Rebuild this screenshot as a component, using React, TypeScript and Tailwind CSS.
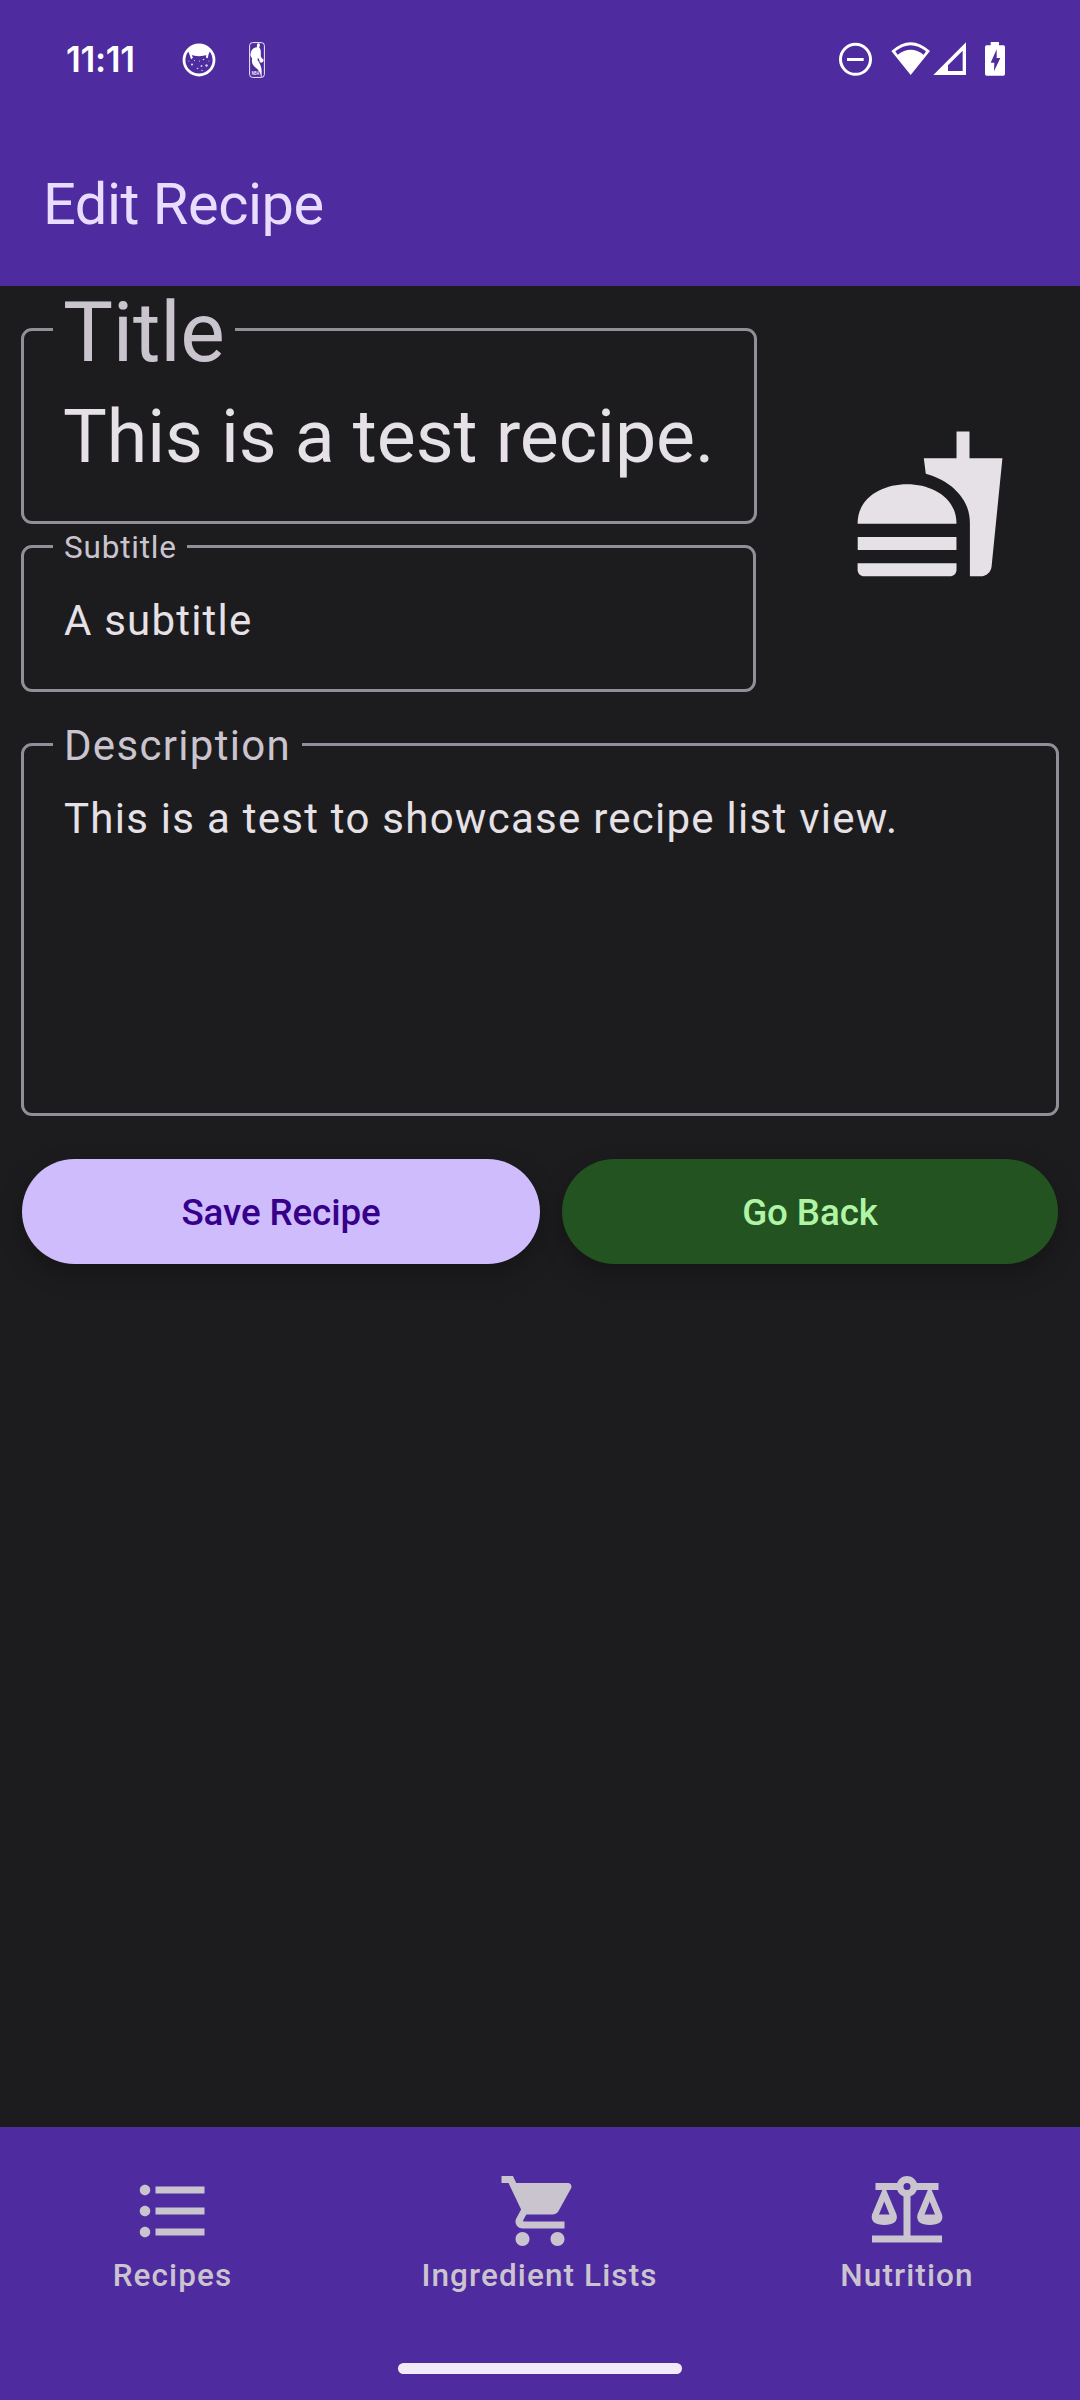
import type { ReactNode } from "react";

function CatIcon() {
  return (
    <svg width="34" height="34" viewBox="0 0 34 34" fill="none">
      <circle cx="17" cy="17" r="15" stroke="#fff" strokeWidth="2.8" />
      <path
        d="M6 8C9 3.500 13 2 17 2S25 3.500 28 8L26.500 11.500 25.800 15.300 23.800 14.600 24.300 12.300C22.500 11.800 21.500 13.200 17 13.200S11.500 11.800 9.700 12.300L11 14.800 9 16.300 7.500 11.500 6 8Z"
        fill="#fff"
      />
      <g fill="#fff" opacity="0.8">
        <circle cx="10" cy="21.500" r="1.100" />
        <circle cx="24.500" cy="22.500" r="1.200" />
        <circle cx="19.500" cy="23" r="0.900" />
        <circle cx="15.500" cy="25.500" r="0.800" />
        <circle cx="17.500" cy="18" r="0.600" />
        <circle cx="12.500" cy="17.500" r="0.600" />
        <circle cx="21.500" cy="16.500" r="0.800" />
        <circle cx="20" cy="27.500" r="0.700" />
        <circle cx="7" cy="18" r="0.500" />
        <circle cx="27" cy="18" r="0.500" />
      </g>
    </svg>
  );
}

function BasketballIcon() {
  return (
    <svg width="16" height="36" viewBox="0 0 16 36" fill="none">
      <rect x="0.600" y="0.600" width="14.800" height="34.800" rx="3" stroke="#fff" strokeWidth="0.900" />
      <path
        d="M9.200 1.200C11 1 11.200 3 10.600 4.300L10.200 5.500C11.300 6.500 11.800 8 11.800 10V14.500L13 16.500C15 16.500 15 20 13 20.500 11.500 21 10.300 20 10.500 18.500L9 15.500 8.500 18C10.500 20.500 12.200 24 12.600 28V35H12C11.500 31 10 28 6.500 25.500 3.500 23.500 2.200 20 3.200 16.500 1.800 14.500 1 13.500 1.600 11.500 2.200 9 3.200 6.500 6.200 5.600L8 5.200C7.800 3.500 7.800 1.600 9.200 1.200Z"
        fill="#fff"
      />
      <text x="2.700" y="32.600" fontSize="6" fontWeight="500" fill="#fff" fontFamily="Roboto, sans-serif" textLength="7.500" lengthAdjust="spacingAndGlyphs">
        NBA
      </text>
    </svg>
  );
}

function StatusBar() {
  return (
    <div className="flex h-[119px] items-start justify-between pl-[66px] pr-[73px] pt-[42px] text-white">
      <div className="flex items-start">
        <span className="w-[116px] font-['Inter',sans-serif] text-[35px] leading-[34px] font-semibold tracking-[-0.300px]">11:11</span>
        <div className="mt-px">
          <CatIcon />
        </div>
        <div className="ml-[33px]">
          <BasketballIcon />
        </div>
      </div>
      <svg width="168" height="36" viewBox="0 0 504 108" fill="#fff">
        <circle cx="49.500" cy="52" r="45" fill="none" stroke="#fff" strokeWidth="9" />
        <rect x="24" y="48" width="50" height="9" />
        <path
          fillRule="evenodd"
          d="M157 27Q215 -26 273 27L215 99ZM169 28L176 38Q215 9 254 38L261 28Q215 -8 169 28Z"
        />
        <path fillRule="evenodd" d="M283 99L381 1V99ZM371 26L327 70V87H371Z" />
        <path
          fillRule="evenodd"
          d="M455 0H480V10H493Q498 10 498 15V96Q498 101 493 101H443Q438 101 438 96V15Q438 10 443 10H455ZM473 22L455 62H466L465 88L484 48H473Z"
        />
      </svg>
    </div>
  );
}

type FieldProps = {
  label: string;
  value: string;
  boxClass: string;
  labelClass: string;
  valueClass: string;
};

function OutlinedField({ label, value, boxClass, labelClass, valueClass }: FieldProps) {
  return (
    <div className={`relative rounded-[11px] border-[3px] border-[#938f99] ${boxClass}`}>
      <span className={`absolute left-[29px] bg-[#1c1c1e] leading-none whitespace-nowrap text-[#cac4cf] ${labelClass}`}>
        {label}
      </span>
      <div className={`leading-none whitespace-nowrap text-[#e6e1e6] ${valueClass}`}>{value}</div>
    </div>
  );
}

function NavItem({ label, className, children }: { label: string; className: string; children: ReactNode }) {
  return (
    <div className={`flex flex-col items-center pt-[42px] ${className}`}>
      <svg width="84" height="84" viewBox="0 0 24 24" fill="#cac4cf">
        {children}
      </svg>
      <span className="mt-[7px] text-[31.500px] leading-none font-medium tracking-[1.100px] whitespace-nowrap text-[#cac4cf]">
        {label}
      </span>
    </div>
  );
}

export default function App() {
  return (
    <div className="flex h-[2400px] w-[1080px] flex-col overflow-hidden bg-[#1c1c1e] font-['Roboto',sans-serif]">
      <header className="h-[286px] shrink-0 bg-[#4e2b9f]">
        <StatusBar />
        <h1 className="pt-[57px] pl-[43px] text-[57.750px] leading-none tracking-[-0.450px] text-[#e9ddff]">Edit Recipe</h1>
      </header>

      <main className="flex grow flex-col px-[21px] pt-[42px]">
        <div className="flex">
          <div className="flex w-[736px] flex-col gap-[21px]">
            <OutlinedField
              label="Title"
              value="This is a test recipe."
              boxClass="h-[196px]"
              labelClass="top-[-40px] w-[182px] pl-[10px] text-[84px] tracking-[-0.300px]"
              valueClass="pt-[70px] pl-[39px] text-[73.500px] tracking-[-0.080px]"
            />
            <OutlinedField
              label="Subtitle"
              value="A subtitle"
              boxClass="h-[147px] w-[735px]"
              labelClass="top-[-16px] w-[134px] pl-[11px] text-[31.500px] tracking-[0.800px]"
              valueClass="pt-[51.500px] pl-[40px] text-[42px] tracking-[1.200px]"
            />
          </div>
          <div className="flex grow justify-center pt-[97px] pr-[1px] pl-[44px]">
            <svg width="158" height="158" viewBox="0 0 24 24" fill="#e6e1e6">
              <path d="M18.060 22.990h1.660c.84 0 1.530-.64 1.630-1.460L23 5.050h-5V1h-1.970v4.050h-4.970l.3 2.340c1.710.47 3.310 1.320 4.270 2.260 1.440 1.420 2.430 2.890 2.430 5.290v8.050zM1 21.990V21h15.030v.99c0 .55-.45 1-1.010 1H2.010c-.56 0-1.010-.45-1.010-1zm15.030-7c0-8-15.030-8-15.030 0h15.030zM1.020 17h15v2h-15z" />
            </svg>
          </div>
        </div>

        <OutlinedField
          label="Description"
          value="This is a test to showcase recipe list view."
          boxClass="mt-[51px] h-[373px]"
          labelClass="top-[-21px] w-[249px] pl-[11px] text-[42px] tracking-[1.310px]"
          valueClass="pt-[51.500px] pl-[40px] text-[42px] tracking-[1.260px]"
        />

        <div className="mt-[43px] flex gap-[22px] px-px">
          <button className="h-[105px] w-[518px] rounded-full bg-[#cfbcfc] pt-[4px] text-[36.750px] leading-none font-medium tracking-[-0.100px] text-[#37008a] shadow-[0_10px_24px_rgba(0,0,0,0.25)]">
            Save Recipe
          </button>
          <button className="h-[105px] w-[496px] rounded-full bg-[#225320] pt-[4px] text-[36.750px] leading-none font-medium tracking-[-0.100px] text-[#b0f5a6] shadow-[0_10px_24px_rgba(0,0,0,0.25)]">
            Go Back
          </button>
        </div>
      </main>

      <nav className="flex h-[273px] shrink-0 flex-col bg-[#4e2b9f]">
        <div className="flex h-[236px]">
          <NavItem label="Recipes" className="w-[345px]">
            <path d="M4 10.500c-.83 0-1.500.67-1.500 1.500s.67 1.500 1.500 1.500 1.500-.67 1.500-1.500-.67-1.500-1.500-1.500zm0-6c-.83 0-1.500.67-1.500 1.500S3.170 7.500 4 7.500 5.500 6.830 5.500 6 4.830 4.500 4 4.500zm0 12c-.83 0-1.500.68-1.500 1.500s.68 1.500 1.500 1.500 1.500-.68 1.500-1.500-.67-1.500-1.500-1.500zM7 19h14v-2H7v2zm0-6h14v-2H7v2zm0-8v2h14V5H7z" />
          </NavItem>
          <NavItem label="Ingredient Lists" className="w-[389px]">
            <path d="M7 18c-1.100 0-1.990.9-1.990 2S5.900 22 7 22s2-.9 2-2-.9-2-2-2zM1 2v2h2l3.600 7.590-1.350 2.450c-.16.28-.25.610-.25.960 0 1.100.9 2 2 2h12v-2H7.420c-.14 0-.25-.11-.25-.25l.03-.12.900-1.630h7.450c.75 0 1.410-.41 1.750-1.030l3.580-6.490c.08-.14.12-.31.12-.48 0-.55-.45-1-1-1H5.210l-.94-2H1zm16 16c-1.100 0-1.990.9-1.990 2s.89 2 1.990 2 2-.9 2-2-.9-2-2-2z" />
          </NavItem>
          <NavItem label="Nutrition" className="w-[346px]">
            <path
              transform="translate(0 -1)"
              d="M12,3C10.730,3 9.600,3.800 9.180,5H3V7H4.950L2,14C1.530,16 3,17 5.500,17C8,17 9.560,16 9,14L6.050,7H9.170C9.500,7.850 10.150,8.500 11,8.830V20H2V22H22V20H13V8.820C13.850,8.500 14.500,7.850 14.820,7H17.950L15,14C14.530,16 16,17 18.500,17C21,17 22.560,16 22,14L19.050,7H21V5H14.830C14.400,3.800 13.270,3 12,3M12,5A1,1 0 0,1 13,6A1,1 0 0,1 12,7A1,1 0 0,1 11,6A1,1 0 0,1 12,5M5.500,10.250L7,14H4L5.500,10.250M18.500,10.250L20,14H17L18.500,10.250Z"
            />
          </NavItem>
        </div>
        <div className="mx-auto h-[11px] w-[284px] rounded-full bg-[#f1ebf9]" />
      </nav>
    </div>
  );
}
